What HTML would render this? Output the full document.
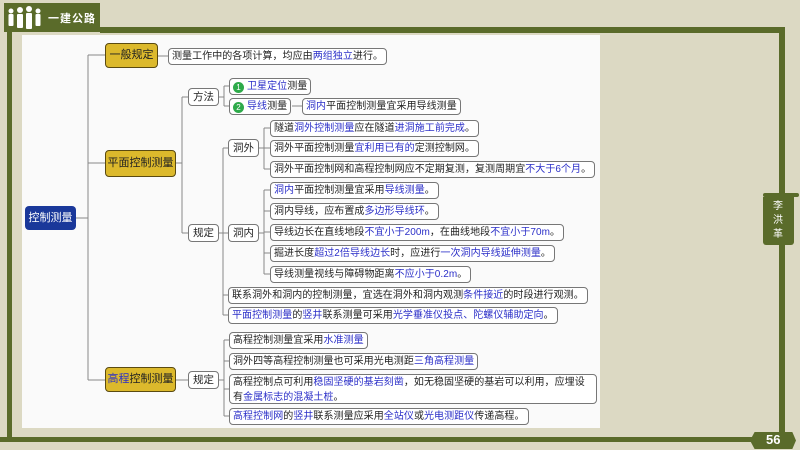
<!DOCTYPE html>
<html><head><meta charset="utf-8"><style>
*{margin:0;padding:0;box-sizing:border-box}
body{width:800px;height:450px;background:#dcd9c3;position:relative;overflow:hidden;font-family:"Liberation Sans","Noto Sans CJK SC",sans-serif}
.a{position:absolute}
.bar{position:absolute;background:#5a6b2a}
.white{position:absolute;left:22px;top:35px;width:578px;height:393px;background:#fafafa}
.n{position:absolute;border:1px solid #777;border-radius:4px;background:#fff;font-size:10px;line-height:15px;padding:0 3px;color:#222;white-space:nowrap;letter-spacing:0.05px}
.s{width:31px;text-align:center;font-size:10.5px;height:18px;line-height:16px}
.g{position:absolute;background:#dcb92c;border:1.5px solid #5a4a10;border-radius:4px;font-size:11px;color:#222;text-align:center}
b{font-weight:normal;color:#2b2fc8}
.c{display:inline-block;width:11px;height:11px;border-radius:50%;background:#2eaa4a;color:#fff;font-size:8px;line-height:11px;text-align:center;margin-right:3px;vertical-align:-1px}
</style></head><body>
<div class="white"></div>
<div class="bar" style="left:100px;top:27px;width:685px;height:6px"></div>
<div class="bar" style="left:779px;top:27px;width:6px;height:414px"></div>
<div class="bar" style="left:7px;top:30px;width:5px;height:412px"></div>
<div class="bar" style="left:0;top:437px;width:760px;height:5px"></div>
<div class="bar" style="left:4px;top:3px;width:96px;height:29px"></div>
<svg class="a" style="left:6px;top:5px" width="40" height="26" fill="#fff">
<circle cx="5" cy="6" r="2.5"/><rect x="2.5" y="9" width="5" height="12" rx="1"/>
<circle cx="14" cy="5" r="3"/><rect x="11" y="9" width="6" height="14" rx="1"/>
<circle cx="23" cy="4" r="3"/><rect x="20" y="8" width="6" height="16" rx="1"/>
<circle cx="32" cy="6" r="2.5"/><rect x="29.5" y="9" width="5" height="12" rx="1"/>
</svg>
<div class="a" style="left:48px;top:10px;color:#fff;font-size:11px;font-weight:bold;letter-spacing:1px">一建公路</div>
<div class="bar" style="left:763px;top:193px;width:36px;height:4px;border-radius:2px"></div>
<div class="bar" style="left:763px;top:197px;width:31px;height:48px;border-radius:0 0 3px 3px"></div>
<div class="a" style="left:770px;top:200px;color:#fff;font-size:10px;line-height:14px;width:16px;text-align:center">李洪革</div>
<div class="bar" style="left:750px;top:432px;width:46px;height:17px;clip-path:polygon(10% 0,92% 0,100% 50%,92% 100%,10% 100%,0 50%)"></div>
<div class="a" style="left:766px;top:432px;color:#fff;font-size:13px;font-weight:bold">56</div>

<svg class="a" style="left:0;top:0" width="800" height="450" fill="none" stroke="#888" stroke-width="1">
<path d="M76 218H88M88 55V380M88 55H105M88 163H105M88 380H105M158 56H168"/>
<path d="M176 163H182M182 97V233M182 97H188M182 233H188"/>
<path d="M219 97H224M224 86V106M224 86H229M224 106H229M292 106H302"/>
<path d="M219 233H223M223 148V315M223 148H228M223 233H228M223 295H228M223 315H228"/>
<path d="M259 148H264M264 128V169M264 128H270M264 148H270M264 169H270"/>
<path d="M259 233H264M264 190V274M264 190H270M264 211H270M264 232H270M264 253H270M264 274H270"/>
<path d="M176 380H188M219 380H224M224 340V416M224 340H229M224 361H229M224 389H229M224 416H229"/>
</svg>

<div class="a" style="left:25px;top:206px;width:51px;height:24px;background:#1a389a;border-radius:4px;color:#fff;font-size:11px;line-height:24px;text-align:center">控制测量</div>
<div class="g" style="left:105px;top:43px;width:53px;height:25px;line-height:22px">一般规定</div>
<div class="g" style="left:105px;top:150px;width:71px;height:27px;line-height:24px">平面控制测量</div>
<div class="g" style="left:105px;top:367px;width:71px;height:25px;line-height:22px"><b>高程</b>控制测量</div>

<div class="n" style="left:168px;top:48px">测量工作中的各项计算，均应由<b>两组独立</b>进行。</div>
<div class="n s" style="left:188px;top:88px">方法</div>
<div class="n" style="left:229px;top:78px"><span class="c">1</span><b>卫星定位</b>测量</div>
<div class="n" style="left:229px;top:98px"><span class="c">2</span><b>导线</b>测量</div>
<div class="n" style="left:302px;top:98px"><b>洞内</b>平面控制测量宜采用导线测量</div>
<div class="n s" style="left:188px;top:224px">规定</div>
<div class="n s" style="left:228px;top:139px">洞外</div>
<div class="n" style="left:270px;top:120px">隧道<b>洞外控制测量</b>应在隧道<b>进洞施工前完成</b>。</div>
<div class="n" style="left:270px;top:140px">洞外平面控制测量<b>宜利用已有的</b>定测控制网。</div>
<div class="n" style="left:270px;top:161px">洞外平面控制网和高程控制网应不定期复测，复测周期宜<b>不大于6个月</b>。</div>
<div class="n s" style="left:228px;top:224px">洞内</div>
<div class="n" style="left:270px;top:182px"><b>洞内</b>平面控制测量宜采用<b>导线测量</b>。</div>
<div class="n" style="left:270px;top:203px">洞内导线，应布置成<b>多边形导线环</b>。</div>
<div class="n" style="left:270px;top:224px">导线边长在直线地段<b>不宜小于200m</b>，在曲线地段<b>不宜小于70m</b>。</div>
<div class="n" style="left:270px;top:245px">掘进长度<b>超过2倍导线边长</b>时，应进行<b>一次洞内导线延伸测量</b>。</div>
<div class="n" style="left:270px;top:266px">导线测量视线与障碍物距离<b>不应小于0.2m</b>。</div>
<div class="n" style="left:228px;top:287px">联系洞外和洞内的控制测量，宜选在洞外和洞内观测<b>条件接近</b>的时段进行观测。</div>
<div class="n" style="left:228px;top:307px"><b>平面控制测量</b>的<b>竖井</b>联系测量可采用<b>光学垂准仪投点、陀螺仪辅助定向</b>。</div>
<div class="n s" style="left:188px;top:371px">规定</div>
<div class="n" style="left:229px;top:332px">高程控制测量宜采用<b>水准测量</b></div>
<div class="n" style="left:229px;top:353px">洞外四等高程控制测量也可采用光电测距<b>三角高程测量</b></div>
<div class="n" style="left:229px;top:374px;width:368px;height:30px;white-space:normal">高程控制点可利用<b>稳固坚硬的基岩刻凿</b>，如无稳固坚硬的基岩可以利用，应埋设有<b>金属标志的混凝土桩</b>。</div>
<div class="n" style="left:229px;top:408px"><b>高程控制网</b>的<b>竖井</b>联系测量应采用<b>全站仪</b>或<b>光电测距仪</b>传递高程。</div>
</body></html>
